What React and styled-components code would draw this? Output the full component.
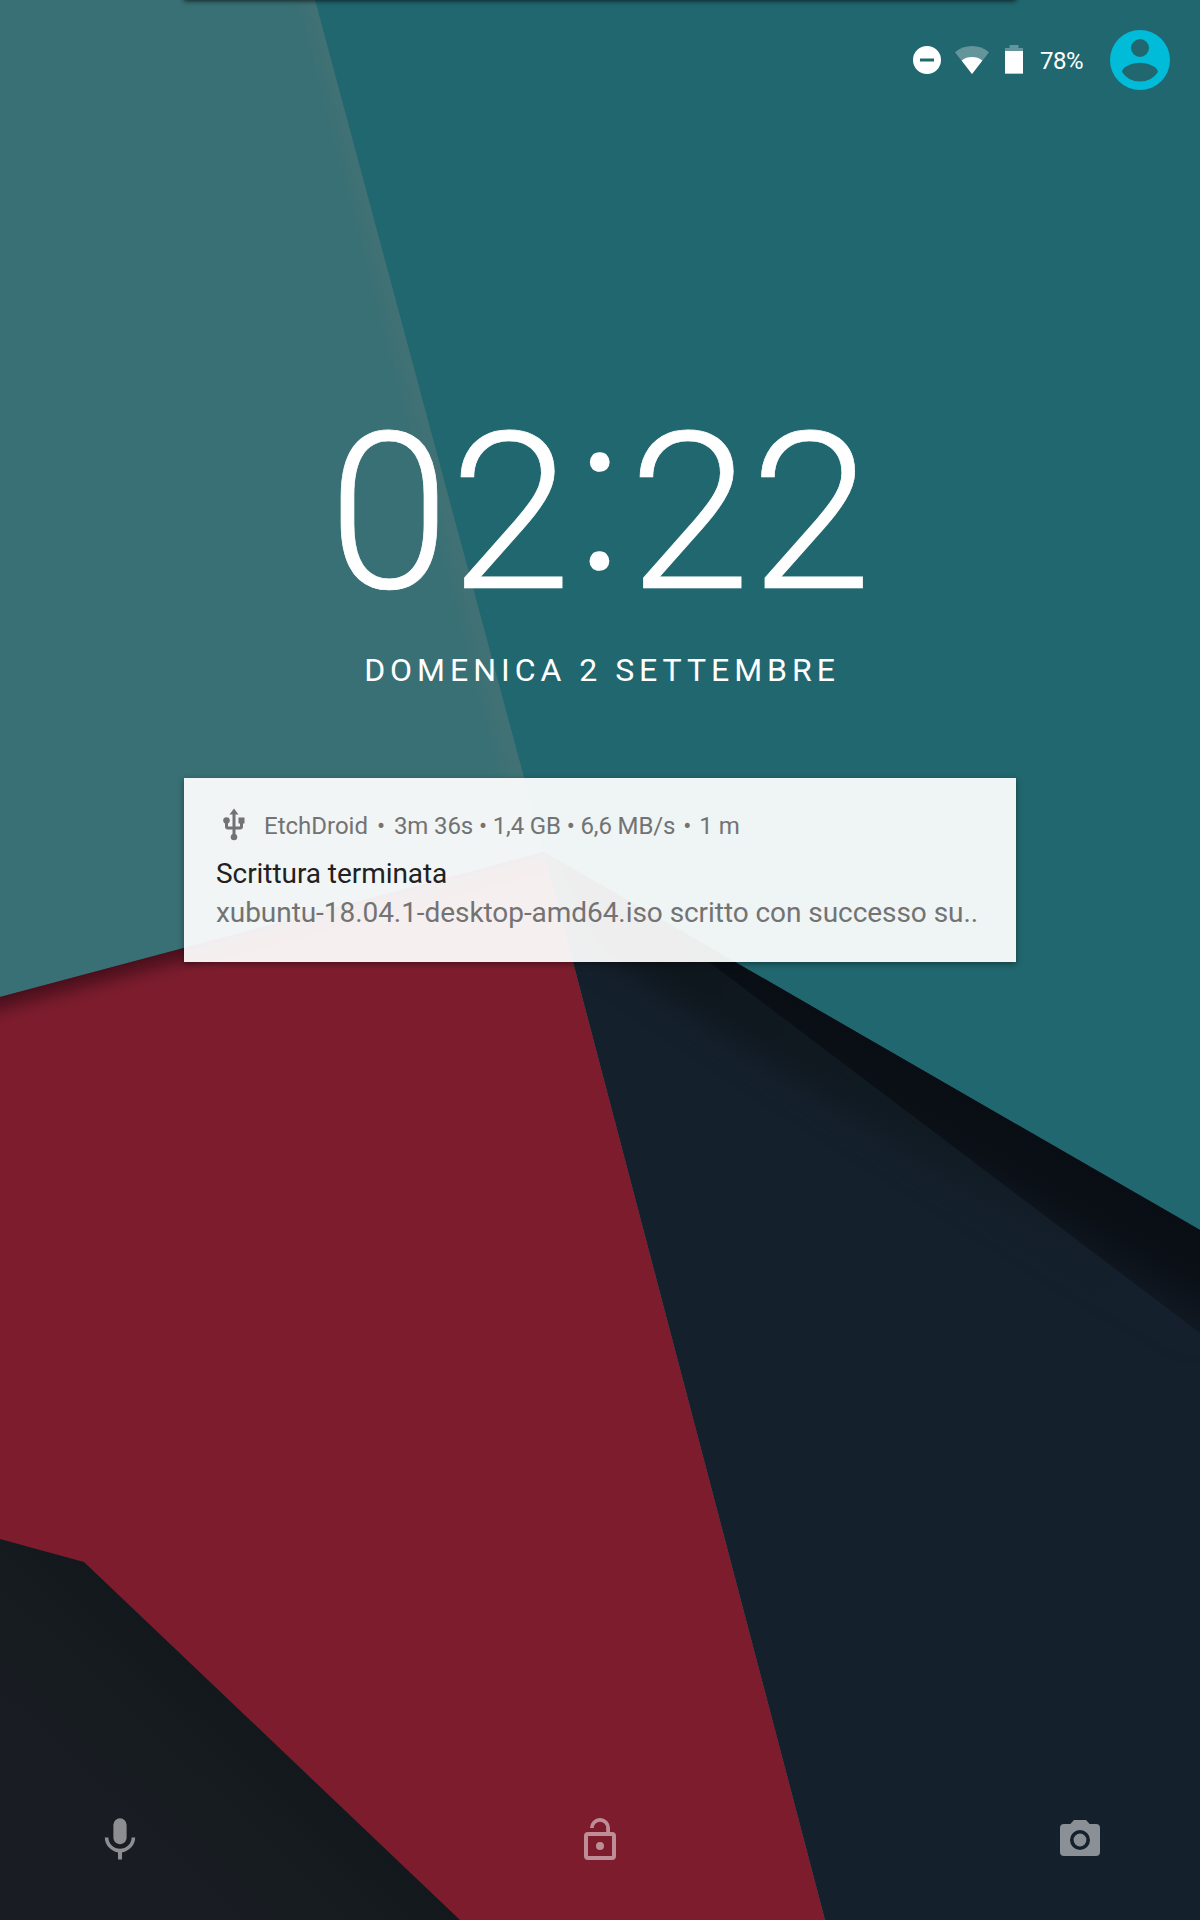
import React from 'react';
import styled, { createGlobalStyle } from 'styled-components';

const GlobalStyle = createGlobalStyle`
  * { box-sizing: border-box; }
  body { margin: 0; font-family: Roboto, sans-serif; background: #20666f; }
`;

const Screen = styled.main`
  position: relative;
  isolation: isolate;
  display: flex;
  flex-direction: column;
  width: 1200px;
  height: 1920px;
  overflow: hidden;
  color: #fff;
`;

const WallpaperArt = styled.svg`
  position: absolute;
  inset: 0;
  z-index: -1;
`;

const PanelShadow = styled.div`
  position: absolute;
  top: -10px;
  left: 184px;
  width: 832px;
  height: 10px;
  box-shadow: 0 1px 5px rgba(0, 0, 0, 0.7);
`;

const StatusBar = styled.header`
  display: flex;
  align-items: center;
  justify-content: flex-end;
  height: 120px;
  padding-right: 30px;
`;

const StatusIcon = styled.svg`
  display: block;
  width: ${(p) => p.$w}px;
  height: ${(p) => p.$h}px;
  margin-right: ${(p) => p.$gap || 0}px;
`;

const BatteryLevel = styled.span`
  width: 70px;
  padding-top: 2px;
  font-size: 24px;
  line-height: 28px;
  letter-spacing: -0.5px;
`;

const ClockBlock = styled.section`
  display: flex;
  flex-direction: column;
  align-items: center;
  height: 658px;
  padding-top: 261px;
`;

const Clock = styled.time`
  display: flex;
  height: 264px;
  font-size: 219px;
  font-weight: 300;
  line-height: 264px;
  white-space: nowrap;
  -webkit-text-stroke: 0.7px #fff;
`;

const Colon = styled.span`
  margin: -19px 6px 0 5.5px;
  -webkit-text-stroke: 1.6px #fff;
`;

const DateLine = styled.div`
  margin-top: 6px;
  padding-left: 4px;
  font-size: 32px;
  line-height: 38px;
  letter-spacing: 4.98px;
  white-space: nowrap;
`;

const Notification = styled.article`
  align-self: center;
  width: 832px;
  height: 184px;
  padding: 30px 32px 0;
  background: rgba(255, 255, 255, 0.93);
  box-shadow: 0 2px 6px rgba(0, 0, 0, 0.4);
`;

const NotificationHeader = styled.div`
  display: flex;
  align-items: center;
  height: 36px;
  color: #737373;
  font-size: 24px;
  line-height: 36px;
  white-space: pre;
`;

const UsbIcon = styled.svg`
  width: 36px;
  height: 36px;
  margin: -2px 12px 0 0;
`;

const Progress = styled.span`
  letter-spacing: -0.13px;
`;

const Divider = styled.span`
  padding: 0 ${(p) => p.$pad}px;
`;

const Title = styled.h1`
  margin: 11px 0 0;
  color: #212121;
  font-size: 28px;
  font-weight: 400;
  line-height: 38px;
  letter-spacing: -0.06px;
`;

const Message = styled.p`
  margin: 1px 0 0;
  color: #737373;
  font-size: 28px;
  line-height: 38px;
  letter-spacing: -0.06px;
  white-space: nowrap;
`;

const Shortcuts = styled.footer`
  display: flex;
  justify-content: space-between;
  margin-top: auto;
  padding: 0 96px 56px;
`;

const ShortcutIcon = styled.svg`
  display: block;
  width: 48px;
  height: 48px;
  fill: #fff;
  opacity: 0.5;
`;

function Wallpaper() {
  return (
    <WallpaperArt width="1200" height="1920" viewBox="0 0 1200 1920">
      <defs>
        <linearGradient id="fold" gradientUnits="userSpaceOnUse" x1="403" y1="430" x2="426" y2="424">
          <stop offset="0" stopColor="#4a7274" stopOpacity="0" />
          <stop offset="1" stopColor="#4a7274" stopOpacity="0.5" />
        </linearGradient>
        <linearGradient id="redShade" gradientUnits="userSpaceOnUse" x1="0" y1="997" x2="7.500" y2="1025">
          <stop offset="0" stopColor="#3f0d18" stopOpacity="0.85" />
          <stop offset="0.35" stopColor="#4a0f1c" stopOpacity="0.6" />
          <stop offset="0.7" stopColor="#5a1422" stopOpacity="0.2" />
          <stop offset="1" stopColor="#7c1c2d" stopOpacity="0" />
        </linearGradient>
        <linearGradient id="core" gradientUnits="userSpaceOnUse" x1="1150" y1="1201" x2="1106" y2="1277">
          <stop offset="0" stopColor="#090e15" />
          <stop offset="0.5" stopColor="#0b1017" />
          <stop offset="1" stopColor="#101822" />
        </linearGradient>
        <linearGradient id="halo" gradientUnits="userSpaceOnUse" x1="640" y1="910" x2="1130" y2="1280">
          <stop offset="0" stopColor="#0e161c" />
          <stop offset="0.6" stopColor="#111b23" />
          <stop offset="1" stopColor="#15202d" />
        </linearGradient>
        <filter id="soft" x="-20%" y="-20%" width="140%" height="140%" colorInterpolationFilters="sRGB">
          <feGaussianBlur stdDeviation="15" />
        </filter>
        <linearGradient id="corner" gradientUnits="userSpaceOnUse" x1="272" y1="1741" x2="150" y2="1869">
          <stop offset="0" stopColor="#12181c" />
          <stop offset="0.5" stopColor="#171c21" />
          <stop offset="1" stopColor="#191d23" />
        </linearGradient>
        <clipPath id="navyClip"><path d="M544 852 1200 1230V1920H825Z" /></clipPath>
      </defs>
      <path fill="#21676f" d="M0 0H1200V1920H0Z" />
      <path fill="#387075" d="M0 0H315L544 852 0 997Z" />
      <path fill="url(#fold)" d="M275 0H315L544 852 504 863Z" />
      <path fill="#15202d" d="M544 852 1200 1230V1920H825Z" />
      <g clipPath="url(#navyClip)">
        <path fill="url(#halo)" filter="url(#soft)" d="M540 830 1200 1200V1333L1080 1262 720 1032 600 950Z" />
        <path fill="url(#core)" d="M633 895 1200 1220V1333L709 962 633 904Z" />
      </g>
      <path fill="#7c1c2d" d="M0 997 544 852 825 1920H0Z" />
      <path fill="url(#redShade)" d="M0 997 544 852 552 882 0 1029Z" />
      <path fill="url(#corner)" d="M0 1539 84 1562 460 1920H0Z" />
    </WallpaperArt>
  );
}

export default function App() {
  return (
    <>
      <GlobalStyle />
      <Screen>
        <Wallpaper />
        <PanelShadow />
        <StatusBar>
          <StatusIcon $w={28} $h={28} $gap={14} viewBox="0 0 28 28">
            <path fill="#fff" fillRule="evenodd" d="M14 0a14 14 0 1 0 0 28 14 14 0 0 0 0-28ZM7 12.5h14v3H7Z" />
          </StatusIcon>
          <StatusIcon $w={34} $h={28} $gap={16} viewBox="0 0 34 28">
            <path fill="#fff" fillOpacity="0.3" d="M17 28 0 6.2C4.8 2.2 10.7 0 17 0s12.2 2.2 17 6.2Z" />
            <path fill="#fff" d="M17 28 6.6 14.4C9.5 12.200 13 11 17 11s7.500 1.200 10.400 3.400Z" />
          </StatusIcon>
          <StatusIcon $w={18} $h={30} $gap={17} viewBox="0 0 18 30">
            <path fill="#fff" fillOpacity="0.3" d="M4.500 0h9v3H18v26H0V3h4.500Z" />
            <path fill="#fff" d="M0 6h18v22.500H0Z" />
          </StatusIcon>
          <BatteryLevel>78%</BatteryLevel>
          <StatusIcon $w={60} $h={60} viewBox="2 2 20 20">
            <path fill="#00bcd8" fillRule="evenodd" d="M12 2a10 10 0 1 0 0 20 10 10 0 0 0 0-20Zm0 3a3 3 0 1 1 0 6 3 3 0 0 1 0-6Zm0 14.200a7.200 7.200 0 0 1-6-3.220c.03-1.990 4-3.080 6-3.080s5.970 1.090 6 3.080a7.200 7.200 0 0 1-6 3.220Z" />
          </StatusIcon>
        </StatusBar>
        <ClockBlock>
          <Clock><span>02</span><Colon>:</Colon><span>22</span></Clock>
          <DateLine>DOMENICA 2 SETTEMBRE</DateLine>
        </ClockBlock>
        <Notification>
          <NotificationHeader>
            <UsbIcon viewBox="0 0 24 24">
              <path fill="#737373" d="M15 7v4h1v2h-3V5h2l-3-4-3 4h2v8H8v-2.070c.7-.37 1.200-1.080 1.200-1.930a2.200 2.200 0 1 0-4.400 0c0 .85.5 1.560 1.200 1.930V13a2 2 0 0 0 2 2h3v3.050c-.71.370-1.200 1.100-1.200 1.950a2.200 2.200 0 0 0 4.400 0c0-.85-.49-1.580-1.200-1.950V15h3a2 2 0 0 0 2-2v-2h1V7Z" />
            </UsbIcon>
            <span>EtchDroid</span>
            <Divider $pad={3}>{' • '}</Divider>
            <Progress>3m 36s • 1,4 GB • 6,6 MB/s</Progress>
            <Divider $pad={2}>{' • '}</Divider>
            <span>1 m</span>
          </NotificationHeader>
          <Title>Scrittura terminata</Title>
          <Message>xubuntu-18.04.1-desktop-amd64.iso scritto con successo su..</Message>
        </Notification>
        <Shortcuts>
          <ShortcutIcon viewBox="0 0 24 24">
            <path d="M12 14.100c1.840 0 3.300-1.480 3.300-3.300V4.400a3.300 3.300 0 0 0-6.600 0v6.400c0 1.820 1.480 3.300 3.300 3.300Zm5.800-3.300c0 3.300-2.800 5.600-5.800 5.600s-5.800-2.300-5.800-5.600H4.400c0 3.750 3 6.850 6.600 7.390V21.800h2v-3.610c3.600-.53 6.600-3.630 6.600-7.390Z" />
          </ShortcutIcon>
          <ShortcutIcon viewBox="0 0 24 24">
            <path fillRule="evenodd" d="M12 17a2 2 0 1 0 0-4 2 2 0 0 0 0 4Zm6-9h-1V6A5 5 0 0 0 7 6h1.900a3.100 3.100 0 0 1 6.200 0v2H6a2 2 0 0 0-2 2v10a2 2 0 0 0 2 2h12a2 2 0 0 0 2-2V10a2 2 0 0 0-2-2Zm0 12H6V10h12Z" />
          </ShortcutIcon>
          <ShortcutIcon viewBox="0 0 24 24">
            <circle cx="12" cy="12" r="3.200" />
            <path fillRule="evenodd" d="M9 2 7.170 4H4a2 2 0 0 0-2 2v12a2 2 0 0 0 2 2h16a2 2 0 0 0 2-2V6a2 2 0 0 0-2-2h-3.170L15 2Zm3 15a5 5 0 1 1 0-10 5 5 0 0 1 0 10Z" />
          </ShortcutIcon>
        </Shortcuts>
      </Screen>
    </>
  );
}
